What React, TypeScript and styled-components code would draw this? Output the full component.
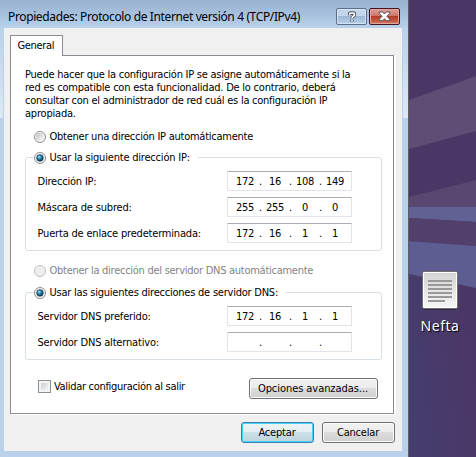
import React from 'react';
import styled, { createGlobalStyle, css } from 'styled-components';

const GlobalStyle = createGlobalStyle`
  * { box-sizing: border-box; }
  body { margin: 0; overflow: hidden; }
`;

const Screen = styled.main`
  display: flex;
  width: 476px;
  height: 457px;
  overflow: hidden;
  background: #4a3766;
  color: #000;
  font-family: 'DejaVu Sans Condensed', 'DejaVu Sans', sans-serif;
  font-stretch: condensed;
  font-size: 11px;
  line-height: 13px;
`;

const Window = styled.section`
  display: flex;
  flex-direction: column;
  width: 409px;
  height: 457px;
  padding: 0 6px 6px 4px;
  border-right: 1px solid #5c6064;
  background:
    linear-gradient(#98b2d0 0, #a6c0dd 14px, #b9d1ea 28px) 0 0 / 100% 28px no-repeat,
    linear-gradient(#b9d1ea, #dde9f6) 0 28px / 3px 90px no-repeat,
    linear-gradient(#b9d1ea, #dde9f6) 403px 28px / 5px 90px no-repeat,
    #b9d1ea;
`;

const TitleBar = styled.header`
  display: flex;
  align-items: flex-start;
  height: 28px;
  padding: 8px 2px 0 4px;
`;

const Title = styled.h1`
  flex: 1;
  margin: 0;
  font: 400 12px/18px 'Noto Sans', sans-serif;
  letter-spacing: -0.37px;
  white-space: nowrap;
`;

const CaptionButton = styled.button<{ $close?: boolean }>`
  display: flex;
  align-items: center;
  justify-content: center;
  width: 31px;
  height: 17px;
  margin-left: 2px;
  padding: 0;
  border: 1px solid #5d6f8b;
  border-radius: 2px;
  background: linear-gradient(#c3d6eb 0 45%, #9db7d4 50%, #b8d0e9);
  box-shadow: inset 0 0 0 1px #d5e4f3;
  ${(p) => p.$close && css`
    border-color: #451521;
    background: linear-gradient(#dfa19a 0, #cc7668 45%, #b43c29 50%, #c65a40 80%, #d58b75);
    box-shadow: inset 0 0 0 1px #dfa69d;
  `}
`;

const Client = styled.div`
  display: flex;
  flex-direction: column;
  width: 398px;
  height: 423px;
  padding: 7px 7px 8px 6px;
  background: #f0f0f0;
`;

const Tab = styled.div`
  z-index: 1;
  width: 53px;
  height: 21px;
  margin-bottom: -1px;
  padding: 3px 0 0 6.5px;
  border: 1px solid #898c95;
  border-bottom: 0;
  background: #fff;
  letter-spacing: -0.35px;
`;

const Pane = styled.div`
  width: 384px;
  height: 359px;
  padding: 12px 12px 0 14px;
  border: 1px solid #898c95;
  background: #fff;
  box-shadow: 2px 1px 0 #fff;
`;

const Line = styled.span<{ $ls?: number }>`
  display: block;
  white-space: nowrap;
  letter-spacing: ${(p) => p.$ls ?? -0.25}px;
`;

const Intro = styled.div`
  height: 62px;
`;

const Option = styled.label<{ $disabled?: boolean }>`
  display: flex;
  align-items: flex-start;
  gap: 3.5px;
  width: max-content;
  height: 14px;
  margin-left: 9px;
  color: ${(p) => (p.$disabled ? '#838383' : '#000')};
  svg { margin-top: 1px; }
`;

const Group = styled.fieldset<{ $height: number; $gap: number }>`
  width: 357px;
  height: ${(p) => p.$height}px;
  margin: 0 0 ${(p) => p.$gap}px;
  padding: 0;
  border: 1px solid #d5dfe5;
  border-radius: 3px;
`;

const Legend = styled.legend`
  height: 13px;
  margin-left: 8px;
  padding: 0 8px 0 0;
  label { margin-left: 0; height: 13px; }
`;

const Fields = styled.div`
  display: grid;
  gap: 6px;
  padding: 7px 0 0 11.5px;
`;

const Row = styled.div`
  display: grid;
  grid-template-columns: 189.5px 125px;
  align-items: start;
  height: 20px;
  > ${Line} { padding-top: 4px; }
`;

const AddressBox = styled.div`
  display: flex;
  align-items: flex-start;
  height: 20px;
  padding: 3px 0 0 5px;
  border: 1px solid #e2e3ea;
  border-top-color: #abadb3;
  border-radius: 1px;
  background: #fff;
`;

const Octet = styled.span`
  width: 24px;
  text-align: center;
  letter-spacing: -0.3px;
`;

const Dot = styled.span`
  width: 6px;
  padding-left: 1px;
  text-align: center;
`;

const PaneFooter = styled.div`
  display: flex;
  justify-content: space-between;
  height: 21px;
  padding: 0 3px 0 13px;
`;

const CheckOption = styled.label`
  display: flex;
  align-items: center;
  gap: 3px;
  height: 13px;
  margin-top: 2px;
`;

const CheckBox = styled.span`
  width: 13px;
  height: 13px;
  border: 1px solid #8e8f8f;
  background: linear-gradient(135deg, #cbcfd5, #f6f6f6) content-box, #f4f4f4;
  padding: 2px;
  box-shadow: inset 0 0 0 1px #f4f4f4;
`;

const Button = styled.button<{ $width: number; $primary?: boolean; $ls?: number }>`
  width: ${(p) => p.$width}px;
  height: 21px;
  padding: 0 1px 0 0;
  border: 1px solid #707070;
  border-radius: 3px;
  background: linear-gradient(#f2f2f2 0, #ebebeb 49%, #dddddd 50%, #cfcfcf);
  box-shadow: inset 0 0 0 1px #fbfbfb;
  color: #000;
  font: inherit;
  line-height: 17px;
  letter-spacing: ${(p) => p.$ls ?? -0.06}px;
  ${(p) => p.$primary && css`
    border-color: #3c7fb1;
    background: linear-gradient(#eef4f7 0, #e3edf2 49%, #cddfe9 50%, #bdd3df);
    box-shadow: inset 0 0 0 1px #48d1f5;
  `}
`;

const Actions = styled.footer`
  display: flex;
  justify-content: flex-end;
  gap: 8px;
  padding-top: 8px;
`;

const Desktop = styled.aside`
  position: relative;
  width: 67px;
  height: 457px;
`;

const Wallpaper = styled.svg`
  display: block;
`;

const DesktopItem = styled.div`
  position: absolute;
  top: 270px;
  left: 9px;
  display: flex;
  flex-direction: column;
  align-items: center;
  width: 44px;
`;

const ItemName = styled.span`
  margin-top: 5px;
  color: #fff;
  font: 400 14px/19px 'Noto Sans', sans-serif;
  letter-spacing: 0.5px;
  text-shadow: 1px 1px 1px #000;
`;

const Spacer = styled.div<{ $h: number }>`
  height: ${(p) => p.$h}px;
`;

function Radio({ checked, disabled }: { checked?: boolean; disabled?: boolean }) {
  return (
    <svg width="12" height="12" viewBox="0 0 12 12">
      <defs>
        <linearGradient id="well" x1="0" y1="0" x2="1" y2="1">
          <stop offset="0.15" stopColor="#c4c7cb" />
          <stop offset="0.85" stopColor="#f7f7f7" />
        </linearGradient>
        <radialGradient id="dot" cx="0.35" cy="0.3" r="0.7">
          <stop offset="0" stopColor="#b5e7f8" />
          <stop offset="0.4" stopColor="#359bc7" />
          <stop offset="1" stopColor="#0b3154" />
        </radialGradient>
      </defs>
      <circle cx="6" cy="6" r="5.5" fill="#f4f4f4" stroke={disabled ? '#bcbcbc' : '#8e8f8f'} />
      <circle cx="6" cy="6" r="4" fill={disabled ? '#ededed' : 'url(#well)'} />
      {checked && <circle cx="6" cy="6" r="3.2" fill="url(#dot)" stroke="#173552" strokeWidth="0.8" />}
    </svg>
  );
}

function Address({ parts }: { parts: string[] }) {
  return (
    <AddressBox>
      {parts.map((part, i) => (
        <React.Fragment key={i}>
          {i > 0 && <Dot>.</Dot>}
          <Octet>{part}</Octet>
        </React.Fragment>
      ))}
    </AddressBox>
  );
}

function Field({ label, parts, ls }: { label: string; parts: string[]; ls?: number }) {
  return (
    <Row>
      <Line $ls={ls}>{label}</Line>
      <Address parts={parts} />
    </Row>
  );
}

export default function App() {
  return (
    <Screen>
      <GlobalStyle />
      <Window>
        <TitleBar>
          <Title>Propiedades: Protocolo de Internet versión 4 (TCP/IPv4)</Title>
          <CaptionButton aria-label="Ayuda">
            <svg width="10" height="12" viewBox="0 0 10 12" fill="none">
              <path d="M2.5 4.2V3.2Q2.5 2 4 2h2Q7.5 2 7.5 3.5 7.5 4.6 6.3 5.2 5 5.8 5 7.3M5 8.7v1.8" stroke="#4b5263" strokeWidth="3.4" />
              <path d="M2.5 3.8V3.2Q2.5 2 4 2h2Q7.5 2 7.5 3.5 7.5 4.6 6.3 5.2 5 5.8 5 7M5 8.8v1.5" stroke="#fff" strokeWidth="1.6" />
            </svg>
          </CaptionButton>
          <CaptionButton $close aria-label="Cerrar">
            <svg width="13" height="11" viewBox="0 0 13 11">
              <path d="M1.3 1h3.4l1.8 2 1.8-2h3.4v1.4L8.9 5.3l2.8 2.9v1.5H8.3L6.5 7.7l-1.8 2H1.3V8.2l2.8-2.9-2.8-2.9z" fill="#fff" stroke="#55505d" />
            </svg>
          </CaptionButton>
        </TitleBar>
        <Client>
          <Tab>General</Tab>
          <Pane>
            <Intro>
              <Line>Puede hacer que la configuración IP se asigne automáticamente si la</Line>
              <Line $ls={-0.22}>red es compatible con esta funcionalidad. De lo contrario, deberá</Line>
              <Line $ls={-0.25}>consultar con el administrador de red cuál es la configuración IP</Line>
              <Line $ls={-0.2}>apropiada.</Line>
            </Intro>
            <Option>
              <Radio />
              <Line>Obtener una dirección IP automáticamente</Line>
            </Option>
            <Spacer $h={7} />
            <Group $height={100} $gap={13}>
              <Legend>
                <Option>
                  <Radio checked />
                  <Line $ls={-0.2}>Usar la siguiente dirección IP:</Line>
                </Option>
              </Legend>
              <Fields>
                <Field label="Dirección IP:" parts={['172', '16', '108', '149']} ls={-0.2} />
                <Field label="Máscara de subred:" parts={['255', '255', '0', '0']} ls={-0.17} />
                <Field label="Puerta de enlace predeterminada:" parts={['172', '16', '1', '1']} ls={-0.19} />
              </Fields>
            </Group>
            <Option $disabled>
              <Radio disabled />
              <Line $ls={-0.27}>Obtener la dirección del servidor DNS automáticamente</Line>
            </Option>
            <Spacer $h={8} />
            <Group $height={74} $gap={18}>
              <Legend>
                <Option>
                  <Radio checked />
                  <Line $ls={-0.23}>Usar las siguientes direcciones de servidor DNS:</Line>
                </Option>
              </Legend>
              <Fields>
                <Field label="Servidor DNS preferido:" parts={['172', '16', '1', '1']} ls={-0.18} />
                <Field label="Servidor DNS alternativo:" parts={['', '', '', '']} ls={-0.18} />
              </Fields>
            </Group>
            <PaneFooter>
              <CheckOption>
                <CheckBox />
                <Line $ls={-0.31}>Validar configuración al salir</Line>
              </CheckOption>
              <Button $width={129}>Opciones avanzadas...</Button>
            </PaneFooter>
          </Pane>
          <Actions>
            <Button $width={73} $primary $ls={-0.2}>Aceptar</Button>
            <Button $width={73} $ls={-0.2}>Cancelar</Button>
          </Actions>
        </Client>
      </Window>
      <Desktop>
        <Wallpaper width="67" height="457" viewBox="0 0 67 457">
          <defs>
            <linearGradient id="base" x1="0" y1="1" x2="1" y2="0.6">
              <stop offset="0" stopColor="#453e70" />
              <stop offset="1" stopColor="#4a3766" />
            </linearGradient>
          </defs>
          <path d="M0 0H67V290H0z" fill="#4a3766" />
          <path d="M0 270H67V457H0z" fill="url(#base)" />
          <path d="M0 100L67 76V131L0 149z" fill="#5f4d76" />
          <path d="M0 197L67 180V207H0z" fill="#584770" />
          <path d="M0 207H67V222L0 218z" fill="#616193" />
          <path d="M0 218L67 222V246L0 241z" fill="#513f6c" />
          <path d="M0 241L67 246V288L0 274z" fill="#5d5d91" />
        </Wallpaper>
        <DesktopItem>
          <svg width="38" height="41" viewBox="0 0 38 41">
            <defs>
              <linearGradient id="paper" x1="0" y1="0" x2="0" y2="1">
                <stop offset="0" stopColor="#d2d2d2" />
                <stop offset="1" stopColor="#f7f7f7" />
              </linearGradient>
            </defs>
            <rect x="1.5" y="3" width="35" height="37" rx="2" fill="#251c35" opacity="0.6" />
            <rect x="1.5" y="1.5" width="35" height="37" rx="1.5" fill="url(#paper)" stroke="#6f6f68" />
            <rect x="2.5" y="2.5" width="33" height="35" rx="0.5" fill="none" stroke="#fff" />
            <path d="M7 11h24M7 15h24M7 19h24M7 23h24M7 27h24M7 31h17" stroke="#999" strokeWidth="2" />
          </svg>
          <ItemName>Nefta</ItemName>
        </DesktopItem>
      </Desktop>
    </Screen>
  );
}
